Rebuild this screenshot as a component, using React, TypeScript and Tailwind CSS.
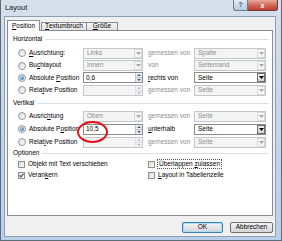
import React from 'react'

// accelerator letter underline
const u = (s: string, i: number) => (
  <>
    {s.slice(0, i)}
    <span className="underline underline-offset-[1px]">{s[i]}</span>
    {s.slice(i + 1)}
  </>
)

function Down({ color }: { color: string }) {
  return (
    <svg width="5" height="3" viewBox="0 0 5 3">
      <path d="M0 0h5L2.5 3z" fill={color} />
    </svg>
  )
}

function Up({ color }: { color: string }) {
  return (
    <svg width="4" height="2" viewBox="0 0 4 2">
      <path d="M0 2h4L2 0z" fill={color} />
    </svg>
  )
}

function Combo({ text, on }: { text: string; on?: boolean }) {
  return (
    <div
      className={`flex h-[11px] items-stretch border ${
        on ? 'border-[#8b8b8b] bg-white text-black' : 'border-[#c3c7cc] bg-[#f4f4f4] text-[#8d8d8d]'
      }`}
    >
      <span className="flex flex-1 items-center pl-[3px]">{text}</span>
      <span
        className={`flex w-[8px] items-center justify-center border ${
          on ? 'border-[#6f6f6f] bg-gradient-to-b from-[#f3f3f3] to-[#d3d3d3]' : 'border-[#dadada] bg-[#f6f6f6]'
        }`}
      >
        <Down color={on ? '#000' : '#a8a8a8'} />
      </span>
    </div>
  )
}

function Spin({ text, on }: { text: string; on?: boolean }) {
  return (
    <div
      className={`flex h-[11px] items-stretch border ${
        on ? 'border-[#8b8b8b] bg-white text-black' : 'border-[#c3c7cc] bg-[#f4f4f4] text-[#8d8d8d]'
      }`}
    >
      <span className="flex flex-1 items-center pl-[2px]">{text}</span>
      <span className="flex w-[7px] flex-col">
        <span
          className={`flex flex-1 items-center justify-center border-l ${
            on ? 'border-[#b9c4d0] bg-[#e9eef4]' : 'border-[#dde1e5] bg-[#f3f4f6]'
          }`}
        >
          <Up color={on ? '#4d6178' : '#b4bcc6'} />
        </span>
        <span
          className={`flex flex-1 items-center justify-center border-l border-t ${
            on ? 'border-[#b9c4d0] bg-[#e3e9f0]' : 'border-[#dde1e5] bg-[#f1f2f4]'
          }`}
        >
          <span className="flex rotate-180">
            <Up color={on ? '#4d6178' : '#b4bcc6'} />
          </span>
        </span>
      </span>
    </div>
  )
}

function Radio({ checked }: { checked?: boolean }) {
  return (
    <span className="flex h-[8px] w-[8px] items-center justify-center rounded-full border border-[#8e979f] bg-gradient-to-br from-[#dedede] to-[#fbfbfb]">
      {checked && (
        <span className="h-[4px] w-[4px] rounded-full bg-[radial-gradient(circle_at_35%_35%,#9fd0f2,#1c5a9c)]" />
      )}
    </span>
  )
}

function Check({ checked }: { checked?: boolean }) {
  return (
    <span className="flex h-[7px] w-[7px] items-center justify-center border border-[#8f8f8f] bg-gradient-to-br from-[#dadada] to-[#fbfbfb]">
      {checked && (
        <svg width="6" height="5" viewBox="0 0 6 5">
          <path d="M0.6 2.4 L2.3 4.2 L5.4 0.5" stroke="#34528f" strokeWidth="1.3" fill="none" />
        </svg>
      )}
    </span>
  )
}

function Section({ title, h }: { title: string; h: string }) {
  return (
    <div className={`flex items-center gap-[3px] pl-[5px] pr-[3px] ${h}`}>
      <span>{title}</span>
      <span className="h-px flex-1 bg-[#d9e1ea]" />
    </div>
  )
}

type RowProps = {
  h: string
  checked?: boolean
  label: React.ReactNode
  field: React.ReactNode
  label2: React.ReactNode
  label2On?: boolean
  combo2: string
  combo2On?: boolean
}

function Row({ h, checked, label, field, label2, label2On, combo2, combo2On }: RowProps) {
  return (
    <div className={`flex items-center pl-[10px] ${h}`}>
      <span className="flex w-[11px]">
        <Radio checked={checked} />
      </span>
      <span className="w-[54px]">{label}</span>
      <div className="w-[60px]">{field}</div>
      <span className={`ml-[5px] w-[46px] ${label2On ? 'text-black' : 'text-[#8d8d8d]'}`}>{label2}</span>
      <div className="w-[72px]">
        <Combo text={combo2} on={combo2On} />
      </div>
    </div>
  )
}

export default function App() {
  return (
    <div className="relative h-[241px] w-[282px] overflow-hidden font-['Liberation_Sans',Arial,sans-serif] text-[6.5px] leading-none text-black">
      {/* window frame */}
      <div className="flex h-full w-full flex-col border-x border-b border-[#5b6a7c] bg-gradient-to-b from-[#d6e0eb] via-[#c6d6e9] to-[#b9cfe9]">
        <div className="flex h-[16px] shrink-0 items-start">
          <span className="mt-[4px] pl-[4px] text-[7.4px] text-[#111]">Layout</span>
          <div className="ml-auto mr-[3px] flex">
            <div className="flex h-[11px] w-[15px] items-center justify-center rounded-bl-[3px] border border-t-0 border-[#6d7d91] bg-gradient-to-b from-[#e3eaf3] to-[#b8c8dc] text-[6.5px] font-bold text-[#44566c]">
              ?
            </div>
            <div className="flex h-[11px] w-[30px] items-center justify-center rounded-br-[3px] border border-l-0 border-t-0 border-[#6a3b3b] bg-gradient-to-b from-[#e9a99c] via-[#d06b5c] to-[#c1392c] text-[7px] font-bold text-white">
              x
            </div>
          </div>
        </div>

        {/* client */}
        <div className="mb-[3px] ml-[3px] mr-[5px] flex flex-1 flex-col border border-[#8d9fb5] bg-[#f0f0f0] px-[2px] pt-[3px]">
          {/* tabs */}
          <div className="flex h-[10px] items-end">
            <div className="relative z-10 -mb-px flex h-[11px] w-[33px] items-center justify-center border border-b-0 border-[#898c95] bg-white">
              {u('Position', 0)}
            </div>
            <div className="ml-px flex h-[8px] w-[46px] items-center justify-center border border-b-0 border-[#898c95] bg-gradient-to-b from-[#f4f4f4] to-[#e3e3e3]">
              {u('Textumbruch', 0)}
            </div>
            <div className="flex h-[8px] w-[31px] items-center justify-center border border-b-0 border-l-0 border-[#898c95] bg-gradient-to-b from-[#f4f4f4] to-[#e3e3e3]">
              {u('Größe', 0)}
            </div>
          </div>

          {/* panel */}
          <div className="flex h-[186px] flex-col border border-[#898c95] bg-white">
            <Section title="Horizontal" h="h-[16px]" />
            <Row
              h="h-[12.4px]"
              label={u('Ausrichtung:', 0)}
              field={<Combo text="Links" />}
              label2="gemessen von"
              combo2="Spalte"
            />
            <Row
              h="h-[12.4px]"
              label={u('Buchlayout', 2)}
              field={<Combo text="Innen" />}
              label2="von"
              combo2="Seitenrand"
            />
            <Row
              h="h-[12.4px]"
              checked
              label={u('Absolute Position', 9)}
              field={<Spin text="0,6" on />}
              label2={u('rechts von', 0)}
              label2On
              combo2="Seite"
              combo2On
            />
            <Row
              h="h-[12.4px]"
              label={u('Relative Position', 4)}
              field={<Spin text="" />}
              label2="gemessen von"
              combo2="Seite"
            />
            <Section title="Vertikal" h="h-[13px]" />
            <Row
              h="h-[13px]"
              label={u('Ausrichtung', 6)}
              field={<Combo text="Oben" />}
              label2="gemessen von"
              combo2="Seite"
            />
            <Row
              h="h-[13px]"
              checked
              label={u('Absolute Position', 10)}
              field={<Spin text="10,5" on />}
              label2={u('unterhalb', 0)}
              label2On
              combo2="Seite"
              combo2On
            />
            <Row
              h="h-[13px]"
              label={u('Relative Position', 5)}
              field={<Spin text="" />}
              label2="gemessen von"
              combo2="Seite"
            />
            <Section title="Optionen" h="h-[10px]" />
            <div className="flex h-[11px] items-center pl-[10px]">
              <div className="flex w-[130px] items-center gap-[3px]">
                <Check />
                <span>{u('Objekt mit Text verschieben', 2)}</span>
              </div>
              <div className="flex items-center gap-[2px]">
                <Check />
                <span className="border border-dotted border-[#555] p-px">{u('Überlappen zulassen', 11)}</span>
              </div>
            </div>
            <div className="flex h-[11px] items-center pl-[10px]">
              <div className="flex w-[130px] items-center gap-[3px]">
                <Check checked />
                <span>{u('Verankern', 5)}</span>
              </div>
              <div className="flex items-center gap-[3px]">
                <Check />
                <span>{u('Layout in Tabellenzelle', 0)}</span>
              </div>
            </div>
          </div>

          {/* buttons */}
          <div className="mt-[6px] flex justify-end gap-[7px]">
            <button className="flex h-[11px] w-[41px] items-center justify-center rounded-[2px] border border-[#3c7fb1] bg-gradient-to-b from-[#f2f2f2] via-[#e6e6e6] to-[#d3d3d3] text-[6.5px] shadow-[inset_0_0_0_1px_#a9dcf5]">
              OK
            </button>
            <button className="flex h-[11px] w-[43px] items-center justify-center rounded-[2px] border border-[#707070] bg-gradient-to-b from-[#f2f2f2] via-[#e6e6e6] to-[#d3d3d3] text-[6.5px]">
              Abbrechen
            </button>
          </div>
        </div>
      </div>

      {/* red annotation ellipse */}
      <div className="absolute left-[77px] top-[121px] h-[22px] w-[31px] rounded-[50%] border-2 border-[#e3131c]" />
    </div>
  )
}
